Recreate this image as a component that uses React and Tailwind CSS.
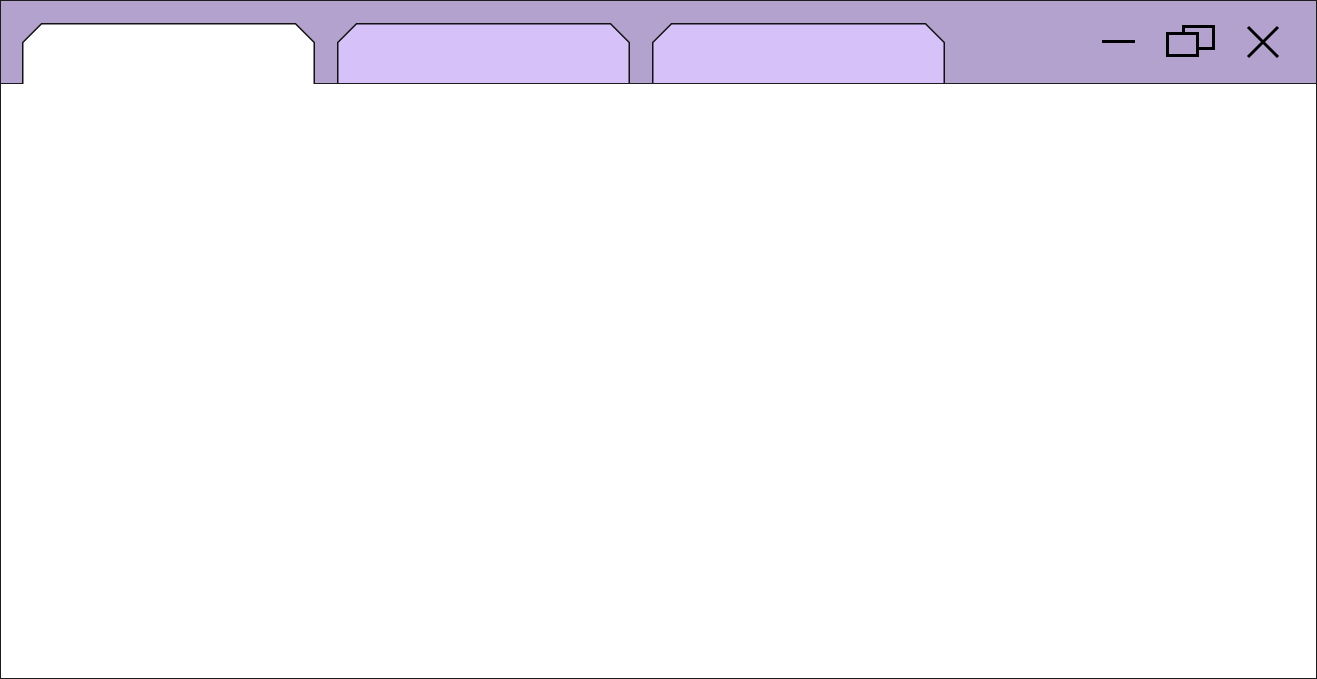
import React from 'react';

const Tab = ({ active }) => (
  <svg
    width="293"
    height={active ? 61 : 60}
    viewBox={active ? '0 0 293 61' : '0 0 293 60'}
    className={active ? 'block -mb-px' : 'block'}
  >
    <path
      d={active ? 'M0.75 61 V19.5 L19.5 0.75 H273.5 L292.25 19.5 V61' : 'M0.75 60 V19.5 L19.5 0.75 H273.5 L292.25 19.5 V60'}
      fill={active ? '#ffffff' : '#d6c2f8'}
      stroke="#111"
      strokeWidth="1.5"
    />
  </svg>
);

const App = () => {
  return (
    <div className="w-full h-[679px] bg-white border border-[#1c1c1c] flex flex-col overflow-hidden">
      {/* barra de título */}
      <div className="h-[83px] shrink-0 bg-[#b3a2cd] border-b border-[#1c1c1c] flex">
        <div className="self-end flex gap-[22px] pl-[21px]">
          <Tab active />
          <Tab />
          <Tab />
        </div>
        <div className="ml-auto self-start flex pt-[22px] pr-[34px] gap-[28px]">
          <svg width="36" height="36" viewBox="0 0 36 36">
            <path d="M2 18.5 H35" stroke="#000" strokeWidth="3" />
          </svg>
          <svg width="52" height="36" viewBox="0 0 52 36" fill="none">
            <rect x="3.5" y="10.5" width="30" height="22" stroke="#000" strokeWidth="3" />
            <path d="M19.5 10.5 V3.5 H49.5 V25.5 H33.5" stroke="#000" strokeWidth="3" />
          </svg>
          <svg width="38" height="36" viewBox="0 0 38 36">
            <path d="M4 4 L34 34 M34 4 L4 34" stroke="#000" strokeWidth="3" />
          </svg>
        </div>
      </div>
      <div className="flex-1 bg-white" />
    </div>
  );
};

export default App;
